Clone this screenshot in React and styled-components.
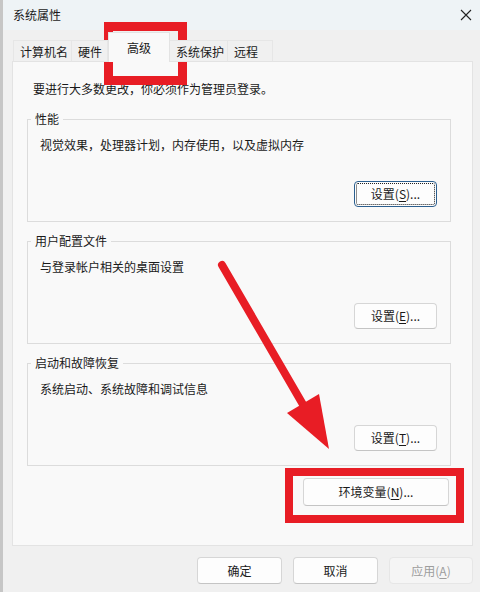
import React from "react";
import styled, { createGlobalStyle } from "styled-components";

const GlobalStyle = createGlobalStyle`
  html, body {
    margin: 0;
    padding: 0;
    background: #f0f0f0;
  }
  body {
    font-family: "Microsoft YaHei UI", "Noto Sans CJK SC", sans-serif;
    font-size: 12px;
    color: #1a1a1a;
  }
`;

const St = {
  Window: styled.div`
    position: relative;
    width: 480px;
    height: 592px;
    box-sizing: border-box;
    border-left: 3px solid #c6c6c6;
    background: #f0f0f0;
    overflow: hidden;
  `,
  TitleBar: styled.div`
    height: 30px;
    display: flex;
    align-items: center;
    justify-content: space-between;
    padding: 0 8px 0 10px;
    background: #eef3f6;
    line-height: 16px;
  `,
  Body: styled.div`
    padding: 0 7px 0 9px;
  `,
  TabRow: styled.div`
    display: flex;
    align-items: flex-end;
    height: 32px;
    padding-left: 1px;
    margin-bottom: -1px;
    position: relative;
    z-index: 1;
  `,
  Tab: styled.div`
    box-sizing: border-box;
    width: ${(p) => p.$w}px;
    height: ${(p) => (p.$active ? 30 : 22)}px;
    padding-left: ${(p) => (p.$active ? 0 : 6)}px;
    text-align: ${(p) => (p.$active ? "center" : "left")};
    line-height: ${(p) => (p.$active ? 30 : 22)}px;
    border: 1px solid ${(p) => (p.$active ? "#e3e3e3" : "#e6e6e6")};
    border-bottom: ${(p) => (p.$active ? "none" : "1px solid #e3e3e3")};
    border-left: ${(p) => (p.$first || p.$active ? "" : "none")};
    background: ${(p) => (p.$active ? "#f9f9f9" : "#f0f0f0")};
    white-space: nowrap;
  `,
  Panel: styled.div`
    box-sizing: border-box;
    height: 485px;
    border: 1px solid #e3e3e3;
    background: #f9f9f9;
    padding: 19px 20px 0 14px;
  `,
  Notice: styled.div`
    line-height: 16px;
    padding-left: 6px;
    margin-bottom: 15px;
  `,
  Group: styled.fieldset`
    margin: 0 0 12px 0;
    width: 424px;
    box-sizing: border-box;
    padding: 0 13px 14px 12px;
    border: 1px solid #dcdcdc;
    min-width: 0;
  `,
  Legend: styled.legend`
    margin-left: -9px;
    padding: 0 4px;
    line-height: 14px;
  `,
  Desc: styled.div`
    line-height: 16px;
    margin-top: 11px;
  `,
  ButtonRow: styled.div`
    display: flex;
    justify-content: flex-end;
    margin-top: ${(p) => p.$top || 0}px;
    gap: 11px;
  `,
  Button: styled.button`
    position: relative;
    box-sizing: border-box;
    width: ${(p) => p.$w || 83}px;
    height: ${(p) => p.$h || 26}px;
    font-family: inherit;
    font-size: 12px;
    color: ${(p) => (p.disabled ? "#9d9d9d" : "#1a1a1a")};
    background: ${(p) => (p.disabled ? "#f5f5f5" : "#fdfdfd")};
    border: 1px solid ${(p) => (p.$focus ? "#2c5f8f" : p.disabled ? "#e6e6e6" : "#d6d6d6")};
    border-bottom-color: ${(p) => (p.$focus ? "#2c5f8f" : p.disabled ? "#e6e6e6" : "#c4c4c4")};
    border-radius: 4px;
    padding: 0;
    line-height: 16px;
    &::after {
      content: "";
      display: ${(p) => (p.$focus ? "block" : "none")};
      position: absolute;
      inset: 1px;
      border: 1px dotted #222;
      border-radius: 2px;
    }
    u {
      text-underline-offset: 2px;
    }
  `,
  EnvRow: styled.div`
    display: flex;
    justify-content: flex-end;
    width: 424px;
    padding-right: 2px;
    box-sizing: border-box;
    margin-top: 6px;
  `,
  Footer: styled.div`
    display: flex;
    justify-content: flex-end;
    gap: 11px;
    margin-top: 11px;
  `,
  Overlay: styled.svg`
    position: absolute;
    left: -3px;
    top: 0;
    pointer-events: none;
  `,
  RedFrame: styled.div`
    position: absolute;
    box-sizing: border-box;
    left: ${(p) => p.$x - 3}px;
    top: ${(p) => p.$y}px;
    width: ${(p) => p.$w}px;
    height: ${(p) => p.$h}px;
    border: ${(p) => p.$t}px solid #e81d25;
    pointer-events: none;
  `,
};

const CloseIcon = () => (
  <svg width="12" height="12" viewBox="0 0 12 12">
    <path d="M1 1 L11 11 M11 1 L1 11" stroke="#222" strokeWidth="1.1" />
  </svg>
);

const tabs = [
  { label: "计算机名", w: 59 },
  { label: "硬件", w: 36 },
  { label: "高级", w: 62, active: true },
  { label: "系统保护", w: 58 },
  { label: "远程", w: 45 },
];

const groups = [
  { title: "性能", desc: "视觉效果，处理器计划，内存使用，以及虚拟内存", key: "S", focus: true },
  { title: "用户配置文件", desc: "与登录帐户相关的桌面设置", key: "E" },
  { title: "启动和故障恢复", desc: "系统启动、系统故障和调试信息", key: "T" },
];

const App = () => {
  return (
    <>
      <GlobalStyle />
      <St.Window>
        <St.TitleBar>
          <span>系统属性</span>
          <CloseIcon />
        </St.TitleBar>
        <St.Body>
          <St.TabRow>
            {tabs.map((t, i) => (
              <St.Tab key={t.label} $w={t.w} $active={t.active} $first={i === 0}>
                {t.label}
              </St.Tab>
            ))}
          </St.TabRow>
          <St.Panel>
            <St.Notice>要进行大多数更改，你必须作为管理员登录。</St.Notice>
            {groups.map((g) => (
              <St.Group key={g.title}>
                <St.Legend>{g.title}</St.Legend>
                <St.Desc>{g.desc}</St.Desc>
                <St.ButtonRow $top={28}>
                  <St.Button $focus={g.focus}>
                    设置(<u>{g.key}</u>)...
                  </St.Button>
                </St.ButtonRow>
              </St.Group>
            ))}
            <St.EnvRow>
              <St.Button $w={146} $h={28}>
                环境变量(<u>N</u>)...
              </St.Button>
            </St.EnvRow>
          </St.Panel>
          <St.Footer>
            <St.Button $w={85} $h={27}>确定</St.Button>
            <St.Button $w={85} $h={27}>取消</St.Button>
            <St.Button $w={84} $h={27} disabled>
              应用(<u>A</u>)
            </St.Button>
          </St.Footer>
        </St.Body>

        <St.RedFrame $x={104} $y={22} $w={83} $h={63} $t={9} />
        <St.RedFrame $x={285} $y={468} $w={179} $h={55} $t={8} />
        <St.Overlay width="480" height="592" viewBox="0 0 480 592">
          <line x1="222" y1="265" x2="305" y2="408" stroke="#e81d25" strokeWidth="8" strokeLinecap="round" />
          <polygon points="287,413 319,394 329,449" fill="#e81d25" />
        </St.Overlay>
      </St.Window>
    </>
  );
};

export default App;
